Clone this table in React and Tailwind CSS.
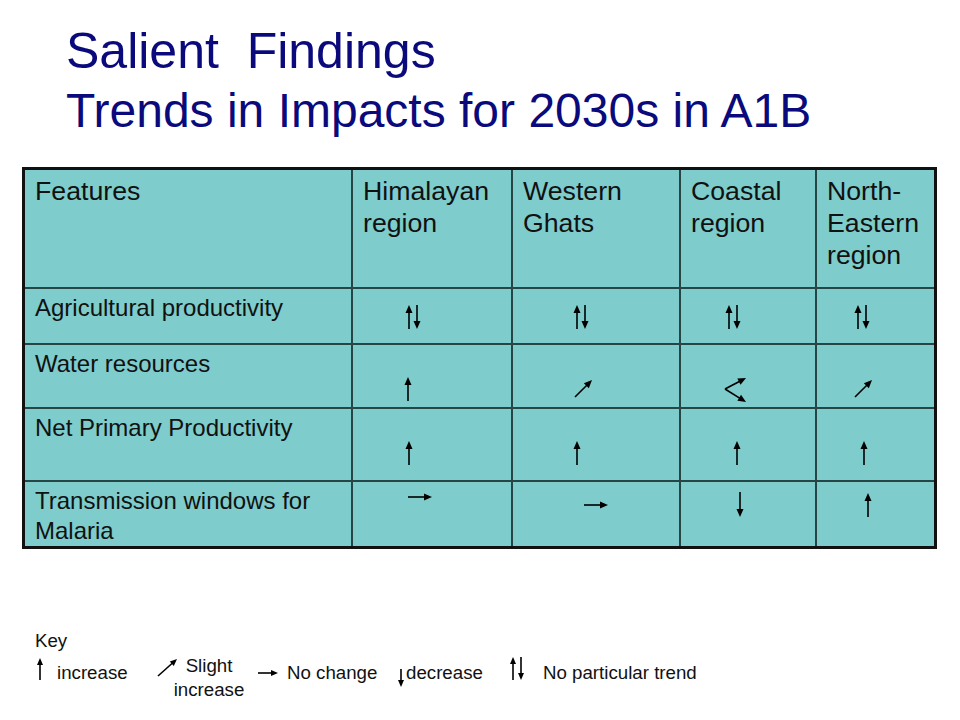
import React from "react";

// kolumny / wiersze tabeli – początki komórek (px na stronie)
const COL_X = [25, 353, 513, 681, 817];
const ROW_Y = [170, 289, 345, 409, 482];

const up = (x, y1, y2) => [x, y2, x, y1];
const down = (x, y1, y2) => [x, y1, x, y2];
const upDown = (x, y1, y2) => [up(x, y1, y2), down(x + 8, y1, y2)];

const rows = [
  {
    label: ["Agricultural productivity"],
    arrows: [upDown(409, 305, 329), upDown(577, 305, 329), upDown(729, 305, 329), upDown(858, 305, 329)],
  },
  {
    label: ["Water resources"],
    arrows: [
      [up(408, 377, 401)],
      [[575, 397, 592, 380]],
      [
        [725, 389, 746, 378],
        [725, 389, 746, 402],
      ],
      [[855, 397, 872, 380]],
    ],
  },
  {
    label: ["Net Primary Productivity"],
    arrows: [[up(409, 441, 465)], [up(577, 441, 465)], [up(737, 441, 465)], [up(864, 441, 465)]],
  },
  {
    label: ["Transmission windows for", "Malaria"],
    arrows: [
      [[408, 497, 432, 497]],
      [[584, 505, 608, 505]],
      [down(740, 492, 517)],
      [up(868, 493, 517)],
    ],
  },
];

const header = [["Features"], ["Himalayan", "region"], ["Western", "Ghats"], ["Coastal", "region"], ["North-", "Eastern", "region"]];

function Arrow({ x1, y1, x2, y2, head = 8, half = 3.5 }) {
  const dx = x2 - x1;
  const dy = y2 - y1;
  const len = Math.hypot(dx, dy) || 1;
  const ux = dx / len;
  const uy = dy / len;
  const bx = x2 - ux * head;
  const by = y2 - uy * head;
  const pts = `${x2},${y2} ${bx - uy * half},${by + ux * half} ${bx + uy * half},${by - ux * half}`;
  return (
    <g>
      <line x1={x1} y1={y1} x2={bx + ux} y2={by + uy} stroke="#000" strokeWidth="1.6" />
      <polygon points={pts} fill="#000" />
    </g>
  );
}

function CellArrows({ list, ox, oy }) {
  return (
    <svg className="absolute inset-0 w-full h-full overflow-visible pointer-events-none">
      {list.map((a, i) => (
        <Arrow key={i} x1={a[0] - ox} y1={a[1] - oy} x2={a[2] - ox} y2={a[3] - oy} />
      ))}
    </svg>
  );
}

function KeyArrow({ w, h, lines, className = "" }) {
  return (
    <svg width={w} height={h} className={"shrink-0 overflow-visible " + className}>
      {lines.map((a, i) => (
        <Arrow key={i} x1={a[0]} y1={a[1]} x2={a[2]} y2={a[3]} head={7} half={3} />
      ))}
    </svg>
  );
}

export default function App() {
  return (
    <div className="w-[960px] h-[720px] bg-white overflow-hidden font-['Liberation_Sans',Arial,sans-serif] text-[#111]">
      {/* tytuł */}
      <div className="pt-[22px] pl-[66px] leading-[59px] text-[#0a0a7c]">
        <div className="text-[50px]">Salient&nbsp; Findings</div>
        <div className="text-[48px]">Trends in Impacts for 2030s in A1B</div>
      </div>

      {/* tabela */}
      <div className="ml-[22px] mt-[27px] w-[915px] border-[3px] border-[#111] bg-[#264545] grid grid-cols-[326px_158px_166px_134px_117px] grid-rows-[117px_54px_62px_71px_64px] gap-[2px]">
        {header.map((h, i) => (
          <div key={i} className="bg-[#7ecccb] pl-[10px] pt-[5px] text-[26.7px] leading-[32px]">
            {h.map((t, j) => (
              <div key={j}>{t}</div>
            ))}
          </div>
        ))}
        {rows.map((r, ri) => (
          <React.Fragment key={ri}>
            <div className="bg-[#7ecccb] pl-[10px] pt-[4px] text-[24px] leading-[30px]">
              {r.label.map((t, j) => (
                <div key={j}>{t}</div>
              ))}
            </div>
            {r.arrows.map((list, ci) => (
              <div key={ci} className="relative bg-[#7ecccb]">
                <CellArrows list={list} ox={COL_X[ci + 1]} oy={ROW_Y[ri + 1]} />
              </div>
            ))}
          </React.Fragment>
        ))}
      </div>

      {/* legenda */}
      <div className="mt-[81px] text-[18.7px] leading-[22px]">
        <div className="pl-[35px]">Key</div>
        <div className="mt-[2px] flex items-start">
          <KeyArrow w={12} h={28} className="ml-[34px]" lines={[[6, 26, 6, 4]]} />
          <div className="ml-[11px] w-[83px] mt-[8px]">increase</div>
          <KeyArrow w={30} h={28} lines={[[18, 22, 37, 5]]} />
          <div className="w-[78px] text-center leading-[24px]">
            <div>Slight</div>
            <div>increase</div>
          </div>
          <KeyArrow w={36} h={28} lines={[[10, 19, 30, 19]]} />
          <div className="ml-[3px] w-[108px] mt-[8px]">No change</div>
          <KeyArrow w={11} h={36} lines={[[6, 15, 6, 33]]} />
          <div className="w-[99px] mt-[8px]">decrease</div>
          <KeyArrow
            w={25}
            h={28}
            lines={[
              [8, 26, 8, 3],
              [16, 3, 16, 26],
            ]}
          />
          <div className="ml-[13px] mt-[8px]">No particular trend</div>
        </div>
      </div>
    </div>
  );
}
